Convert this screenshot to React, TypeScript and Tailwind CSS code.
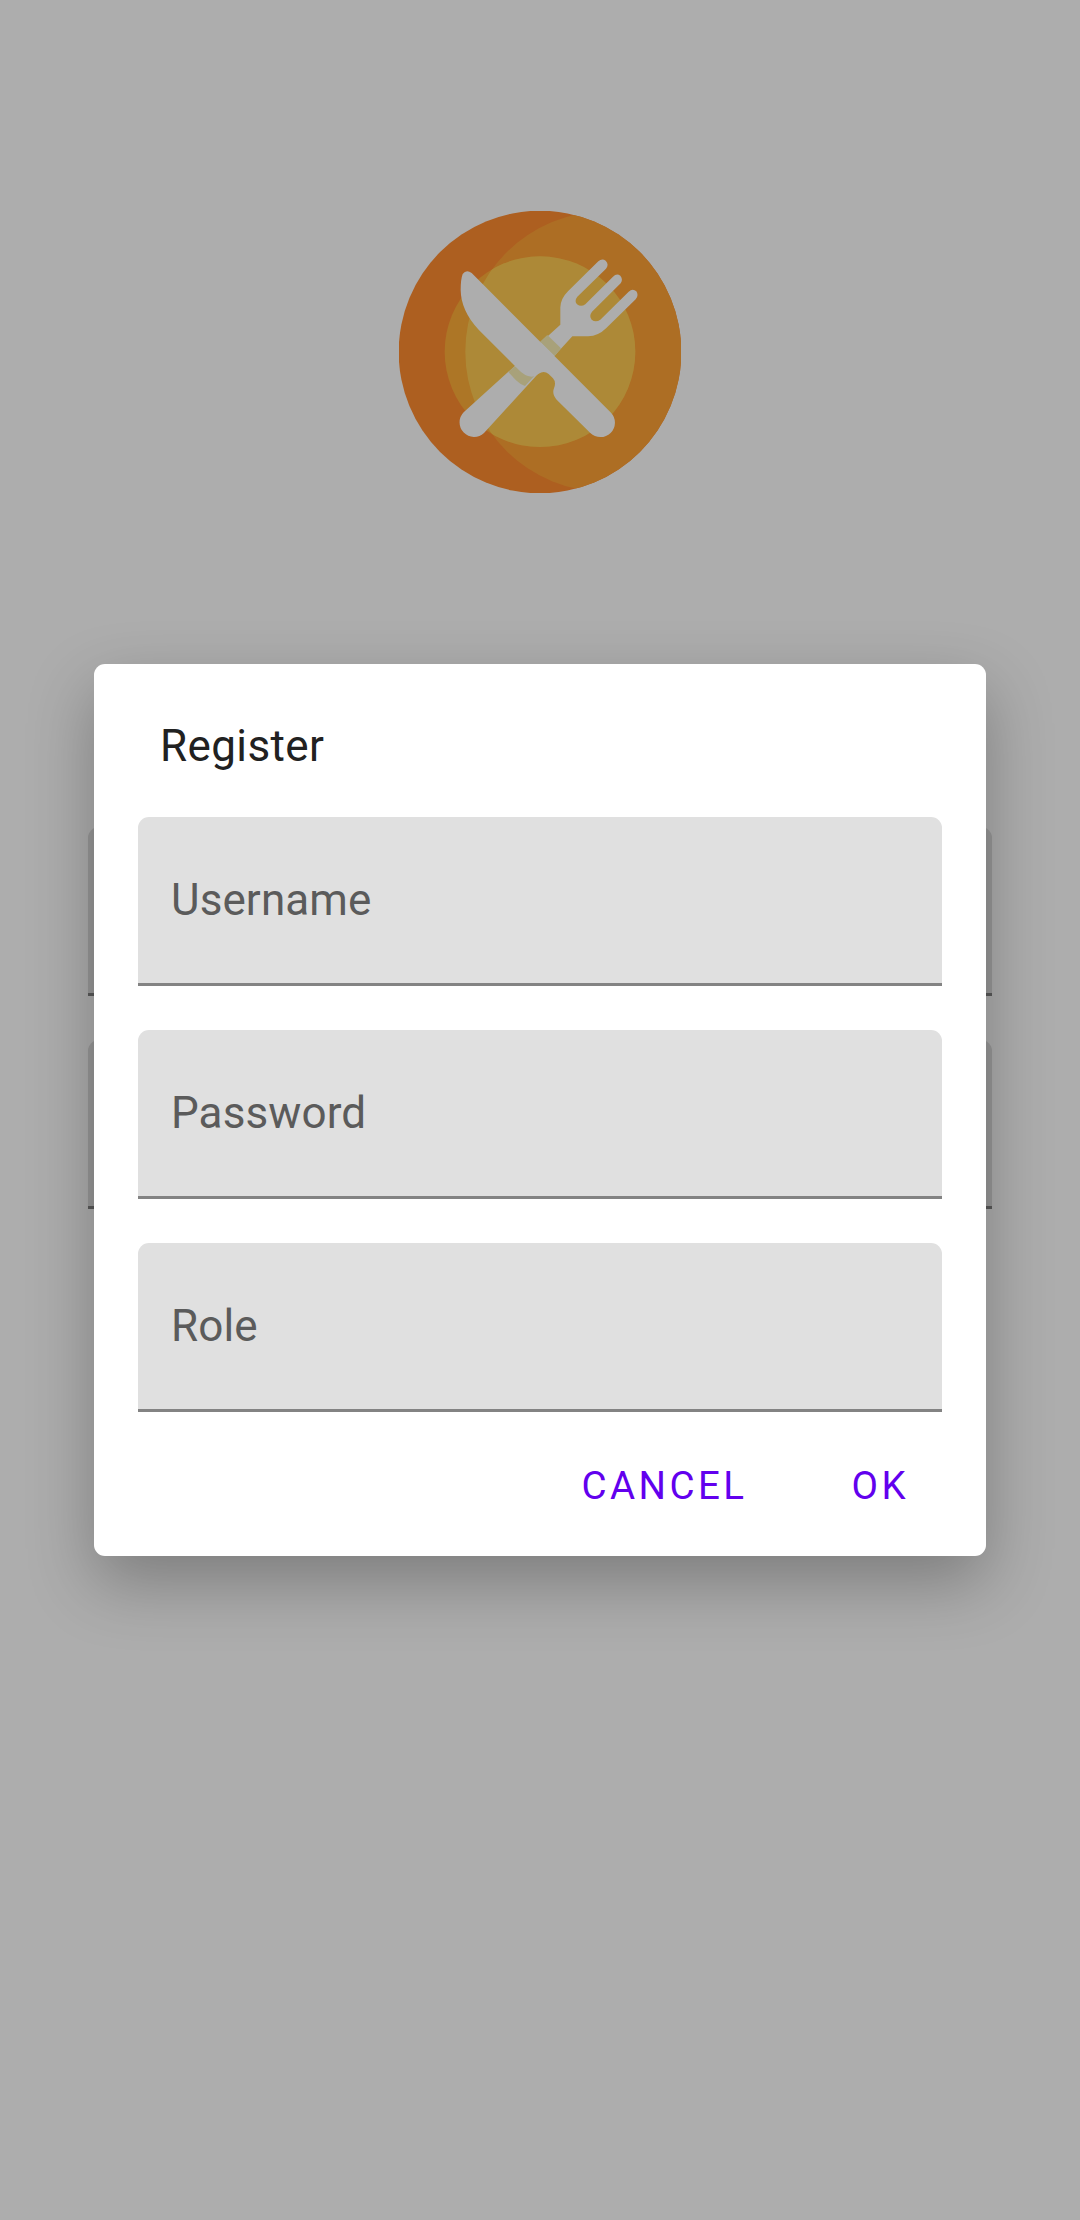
import React from "react";

function Logo() {
  return (
    <svg viewBox="27 33 846 846" className="h-[282px] w-[282px]" aria-hidden="true">
      <defs>
        <clipPath id="plate"><circle cx="450" cy="456" r="424" /></clipPath>
        <clipPath id="center"><circle cx="450" cy="455" r="286" /></clipPath>
      </defs>
      <circle cx="450" cy="456" r="424" fill="#ff8c30" />
      <circle cx="647" cy="455" r="421" fill="#ffa236" clipPath="url(#plate)" />
      <circle cx="450" cy="455" r="286" fill="#ffae38" />
      <circle cx="647" cy="455" r="421" fill="#ffcb52" clipPath="url(#center)" />
      <path
        fill="#fff"
        d="M221 637 L511 374 L511 322 Q512 296 534 274 L625 184 Q636 174 647 182 Q658 193 648 206 L562 290 Q552 303 561 313 Q573 322 586 313 L669 230 Q680 218 691 227 Q700 238 692 250 L606 335 Q596 348 605 359 Q617 368 631 359 L716 275 Q728 264 739 274 Q747 286 737 298 L649 384 Q625 408 594 409 L547 409 L282 699 A43.5 43.5 0 0 1 221 637 Z"
      />
      <path
        fill="#f8eeb4"
        d="M355 516 L374 499 L440 520 L405 558 Q390 553 378 541 Z M450 425 L472 405 L513 445 L494 468 Z"
      />
      <path
        fill="#fff"
        d="M218 222 Q229 207 245 219 L663 638 A43.5 43.5 0 0 1 601 699 L503 602 Q486 586 491 568 Q500 547 489 535 L476 522 Q462 510 446 521 Q436 529 425 530 Q402 527 386 509 L266 389 Q213 333 212 270 Q212 238 218 222 Z"
      />
    </svg>
  );
}

function TextField({ label }: { label?: string }) {
  return (
    <div className="flex h-[169px] items-center rounded-t-[11px] border-b-[3px] border-[#838383] bg-[#e0e0e0] px-[33px]">
      {label && <span className="text-[44px] leading-[52px] tracking-[0.1px] text-[#5b5b5b]">{label}</span>}
    </div>
  );
}

export default function App() {
  return (
    <div className="relative h-[2220px] w-[1080px] overflow-hidden bg-white font-['Roboto',sans-serif]">
      <main className="flex flex-col items-center pt-[211px]">
        <Logo />
        <div className="mt-[334px] flex w-[904px] flex-col gap-[44px]">
          <TextField />
          <TextField />
        </div>
      </main>

      <div className="absolute inset-0 flex items-center justify-center bg-black/32">
        <section
          role="dialog"
          className="flex h-[892px] w-[892px] flex-col rounded-[11px] bg-white px-[44px] shadow-[0_26px_66px_rgba(0,0,0,0.28)]"
        >
          <h1 className="mt-[56px] ml-[22px] text-[44px] leading-[52px] font-normal tracking-[0.4px] text-[#212121]">Register</h1>
          <div className="mt-[45px] flex flex-col gap-[44px]">
            <TextField label="Username" />
            <TextField label="Password" />
            <TextField label="Role" />
          </div>
          <div className="mt-[51px] mr-[33px] flex justify-end gap-[104px] text-[38.5px] leading-[46px] tracking-[3.44px] text-[#6200ee]">
            <button type="button">CANCEL</button>
            <button type="button">OK</button>
          </div>
        </section>
      </div>
    </div>
  );
}
